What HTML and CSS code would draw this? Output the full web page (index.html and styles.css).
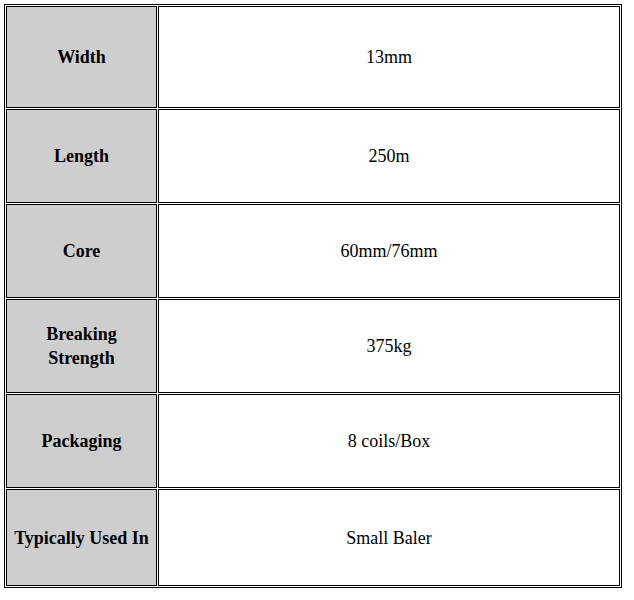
FILE: index.html
```html
<!DOCTYPE html>
<html>
<head>
<meta charset="utf-8">
<link rel="stylesheet" href="styles.css">
</head>
<body>
<table class="specs">
  <tr class="r-tall">
    <th class="label">Width</th>
    <td class="value">13mm</td>
  </tr>
  <tr class="r-std">
    <th class="label">Length</th>
    <td class="value">250m</td>
  </tr>
  <tr class="r-std">
    <th class="label">Core</th>
    <td class="value">60mm/76mm</td>
  </tr>
  <tr class="r-std">
    <th class="label">Breaking<br>Strength</th>
    <td class="value">375kg</td>
  </tr>
  <tr class="r-std">
    <th class="label">Packaging</th>
    <td class="value">8 coils/Box</td>
  </tr>
  <tr class="r-last">
    <th class="label">Typically Used In</th>
    <td class="value">Small Baler</td>
  </tr>
</table>
</body>
</html>
```

FILE: styles.css
```css
html, body {
  margin: 0;
  padding: 0;
  background: #ffffff;
}
body {
  padding: 4px;
  font-family: "Liberation Serif", "Times New Roman", serif;
  font-size: 18px;
  color: #000000;
}
.specs {
  width: 618px;
  border: 1px solid #000000;
  border-collapse: separate;
  border-spacing: 1px;
  table-layout: fixed;
}
.specs th,
.specs td {
  border: 1px solid #000000;
  padding: 0 2px;
  text-align: center;
  vertical-align: middle;
  line-height: 24px;
}
.label {
  width: 145px;
  background: #cecece;
  font-weight: bold;
}
.value {
  background: #ffffff;
  font-weight: normal;
}
.r-tall { height: 102px; }
.r-std { height: 94px; }
.r-last { height: 97px; }
```
